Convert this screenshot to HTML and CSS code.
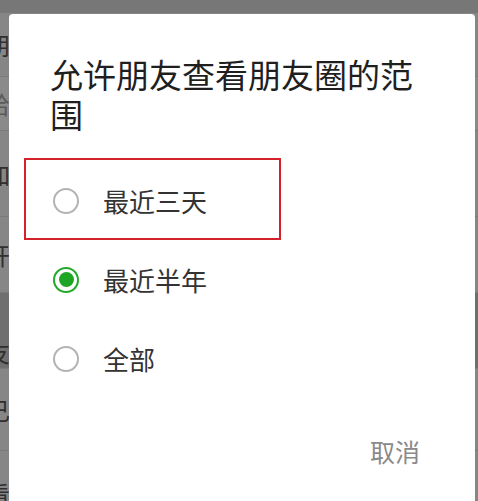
FILE: index.html
```html
<!DOCTYPE html>
<html lang="zh-CN">
<head>
<meta charset="utf-8">
<title>允许朋友查看朋友圈的范围</title>
<link rel="stylesheet" href="styles.css">
</head>
<body>
<div class="screen">
  <div class="bg">
    <div class="bg-top"></div>
    <div class="bg-row h64"><span class="bg-text">朋</span></div>
    <div class="bg-row h54 light"><span class="bg-text sub">给</span></div>
    <div class="bg-row h86"><span class="bg-text">加</span></div>
    <div class="bg-row h76"><span class="bg-text">开</span></div>
    <div class="bg-row h76 dark"><span class="bg-text low">友</span></div>
    <div class="bg-row h82"><span class="bg-text">己</span></div>
    <div class="bg-row h60"><span class="bg-text low">看</span></div>
  </div>

  <div class="dialog">
    <h1 class="title">允许朋友查看朋友圈的范围</h1>
    <div class="options">
      <div class="option">
        <span class="radio"></span>
        <span class="label">最近三天</span>
        <span class="highlight"></span>
      </div>
      <div class="option">
        <span class="radio checked"></span>
        <span class="label">最近半年</span>
      </div>
      <div class="option">
        <span class="radio"></span>
        <span class="label">全部</span>
      </div>
    </div>
    <div class="actions">
      <span class="btn-cancel">取消</span>
    </div>
  </div>
</div>
</body>
</html>
```

FILE: styles.css
```css
* { box-sizing: border-box; }

html, body {
  margin: 0;
  padding: 0;
  width: 478px;
  height: 501px;
  overflow: hidden;
}

body {
  font-family: "Noto Sans CJK SC", "Noto Sans", sans-serif;
  background: #7b7b7b;
}

.screen {
  position: relative;
  width: 478px;
  height: 501px;
  overflow: hidden;
  background: #7b7b7b;
}

/* dimmed page behind the dialog */
.bg {
  display: flex;
  flex-direction: column;
  width: 478px;
}

.bg-top {
  height: 13px;
  background: #777;
}

.bg-row {
  display: flex;
  align-items: center;
  background: #868686;
  border-bottom: 1px solid #7a7a7a;
  overflow: hidden;
}

.bg-row.light { background: #8a8a8a; }
.bg-row.dark { background: #6f6f6f; }

.h54 { height: 54px; }
.h60 { height: 60px; }
.h64 { height: 64px; }
.h76 { height: 76px; }
.h82 { height: 82px; }
.h86 { height: 86px; }

.bg-text {
  margin-left: -14px;
  font-size: 24px;
  line-height: 1;
  color: #2f2f2f;
}

.bg-text.sub { color: #5a5a5a; }
.bg-text.low { align-self: flex-end; margin-bottom: 4px; }

/* dialog */
.dialog {
  position: absolute;
  left: 9px;
  top: 14px;
  width: 466px;
  height: 520px;
  background: #ffffff;
  border-radius: 4px;
  padding: 40px 41px 0 41px;
}

.title {
  margin: 0;
  font-size: 33px;
  line-height: 40px;
  font-weight: 400;
  color: #1f1f1f;
}

.options {
  display: flex;
  flex-direction: column;
  margin-top: 27px;
}

.option {
  position: relative;
  display: flex;
  align-items: center;
  height: 79px;
}

.radio {
  flex: none;
  width: 26px;
  height: 26px;
  margin-left: 3px;
  border: 2px solid #b3b3b3;
  border-radius: 50%;
  display: flex;
  align-items: center;
  justify-content: center;
}

.radio.checked {
  border-color: #22a92a;
}

.radio.checked::after {
  content: "";
  width: 15px;
  height: 15px;
  border-radius: 50%;
  background: #1fa524;
}

.label {
  margin-left: 24px;
  font-size: 26px;
  line-height: 1;
  color: #333333;
}

.highlight {
  position: absolute;
  left: -26px;
  top: -3px;
  width: 257px;
  height: 82px;
  border: 2px solid #d4222b;
  pointer-events: none;
}

.actions {
  display: flex;
  justify-content: flex-end;
  align-items: center;
  height: 50px;
  margin-top: 28px;
  padding-right: 14px;
}

.btn-cancel {
  font-size: 25px;
  line-height: 1;
  color: #8a8a8a;
}
```
